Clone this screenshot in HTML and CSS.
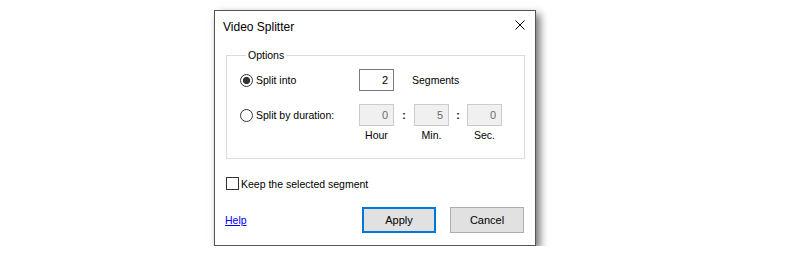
FILE: index.html
```html
<!DOCTYPE html>
<html lang="en">
<head>
    <meta charset="utf-8" />
    <title>Video Splitter</title>
    <link rel="stylesheet" href="styles.css">
</head>
<body>
    <div class="dialog">
        <div class="titlebar">
            <span class="title">Video Splitter</span>
            <span class="close">
                <svg width="10" height="10" viewBox="0 0 10 10">
                    <path d="M0.5 0.5 L9.5 9.5 M9.5 0.5 L0.5 9.5" stroke="#000" stroke-width="1" fill="none" />
                </svg>
            </span>
        </div>

        <div class="dialog-body">
            <fieldset class="options">
                <legend>Options</legend>
                <div class="options-grid">
                    <label class="opt"><input type="radio" name="mode" checked>Split into</label>
                    <input class="num" type="text" value="2">
                    <span class="unit">Segments</span>

                    <label class="opt row2"><input type="radio" name="mode">Split by duration:</label>
                    <input class="num row2" type="text" value="0" disabled>
                    <span class="colon row2">:</span>
                    <input class="num row2" type="text" value="5" disabled>
                    <span class="colon row2">:</span>
                    <input class="num row2" type="text" value="0" disabled>

                    <span class="cap col2">Hour</span>
                    <span class="cap col4">Min.</span>
                    <span class="cap col6">Sec.</span>
                </div>
            </fieldset>

            <label class="check-row"><input type="checkbox">Keep the selected segment</label>

            <div class="footer">
                <a href="#" class="help">Help</a>
                <div class="buttons">
                    <button class="btn btn-default">Apply</button>
                    <button class="btn">Cancel</button>
                </div>
            </div>
        </div>
    </div>
</body>
</html>
```

FILE: styles.css
```css
body {
    margin: 0;
    padding: 10px 0 0 214px;
    background: #fff;
    font-family: "Liberation Sans", Arial, sans-serif;
    font-size: 10.5px;
    color: #000;
}

.dialog {
    box-sizing: border-box;
    width: 322px;
    height: 236px;
    background: #fff;
    border: 1px solid #555;
    box-shadow: 4px 4px 8px rgba(0, 0, 0, 0.55);
}

.titlebar {
    height: 30px;
    display: flex;
    align-items: center;
    justify-content: space-between;
}

.title {
    padding-left: 8px;
    padding-top: 2px;
    font-size: 12px;
}

.close {
    width: 30px;
    height: 30px;
    display: flex;
    align-items: center;
    justify-content: center;
    margin-top: -3px;
}

.dialog-body {
    padding: 0 10px 0 11px;
}

.options {
    margin: 7px 0 0 0;
    padding: 7px 0 16px 13px;
    border: 1px solid #dcdcdc;
}

.options legend {
    margin-left: 6px;
    padding: 0 2px;
    line-height: 14px;
}

.options-grid {
    display: grid;
    grid-template-columns: 119px 35px 20px 35px 18px 35px;
    grid-template-rows: 22px 35px 16px;
}

.opt {
    display: flex;
    align-items: center;
    height: 22px;
}

.row2 {
    align-self: end;
}

.opt input[type="radio"] {
    appearance: none;
    box-sizing: border-box;
    width: 13px;
    height: 13px;
    margin: 0 3px 0 0;
    border: 1px solid #333;
    border-radius: 50%;
    background: #fff;
}

.opt input[type="radio"]:checked {
    background: radial-gradient(circle, #333 0 3.3px, #fff 3.9px);
}

.num {
    box-sizing: border-box;
    width: 35px;
    height: 22px;
    margin: 0;
    padding: 0 5px 0 0;
    border: 1px solid #7a7a7a;
    background: #fff;
    font: inherit;
    font-size: 11px;
    color: #000;
    text-align: right;
    outline: none;
}

.num:disabled {
    border-color: #cccccc;
    background: #f0f0f0;
    color: #6d6d6d;
}

.unit {
    grid-column: 3 / span 4;
    display: flex;
    align-items: center;
    padding-left: 18px;
}

.colon {
    display: flex;
    align-items: center;
    justify-content: center;
    height: 22px;
    font-weight: bold;
}

.cap {
    align-self: end;
    line-height: 14px;
    text-align: center;
}

.col2 { grid-column: 2; }
.col4 { grid-column: 4; }
.col6 { grid-column: 6; }

.check-row {
    display: flex;
    align-items: center;
    height: 13px;
    margin-top: 18px;
}

.check-row input {
    appearance: none;
    box-sizing: border-box;
    width: 13px;
    height: 13px;
    margin: 0 2px 0 0;
    border: 1px solid #333;
    background: #fff;
}

.footer {
    display: flex;
    align-items: center;
    justify-content: space-between;
    height: 26px;
    margin-top: 17px;
    padding-right: 1px;
}

.help {
    margin-left: -1px;
    color: #0000ff;
    text-decoration: underline;
}

.buttons {
    display: flex;
    gap: 14px;
}

.btn {
    box-sizing: border-box;
    width: 74px;
    height: 26px;
    margin: 0;
    padding: 0;
    border: 1px solid #adadad;
    background: #e1e1e1;
    font: inherit;
    font-size: 11px;
    color: #000;
}

.btn-default {
    border: 2px solid #0078d7;
}
```
